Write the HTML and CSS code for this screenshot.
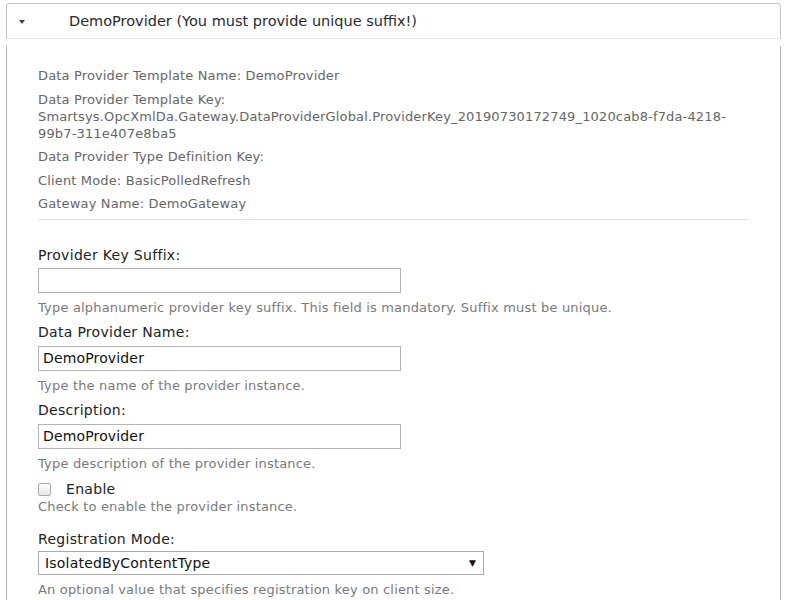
FILE: index.html
```html
<!DOCTYPE html>
<html>
<head>
<meta charset="utf-8">
<link rel="stylesheet" href="styles.css">
</head>
<body>
<div class="page">
  <div class="header">
    <span class="caret"></span>
    <span class="title">DemoProvider (You must provide unique suffix!)</span>
  </div>
  <div class="panel">
    <div class="info">
      <p class="info-item">Data Provider Template Name: DemoProvider</p>
      <p class="info-item">Data Provider Template Key:<br>Smartsys.OpcXmlDa.Gateway.DataProviderGlobal.ProviderKey_20190730172749_1020cab8-f7da-4218-99b7-311e407e8ba5</p>
      <p class="info-item">Data Provider Type Definition Key:</p>
      <p class="info-item">Client Mode: BasicPolledRefresh</p>
      <p class="info-item">Gateway Name: DemoGateway</p>
    </div>
    <div class="sep"></div>
    <div class="field first">
      <label class="label">Provider Key Suffix:</label>
      <div class="input"></div>
      <p class="help">Type alphanumeric provider key suffix. This field is mandatory. Suffix must be unique.</p>
    </div>
    <div class="field">
      <label class="label">Data Provider Name:</label>
      <div class="input">DemoProvider</div>
      <p class="help">Type the name of the provider instance.</p>
    </div>
    <div class="field">
      <label class="label">Description:</label>
      <div class="input">DemoProvider</div>
      <p class="help">Type description of the provider instance.</p>
    </div>
    <div class="field check">
      <div class="check-row"><span class="box"></span><span class="check-label">Enable</span></div>
      <p class="help">Check to enable the provider instance.</p>
    </div>
    <div class="field reg">
      <label class="label">Registration Mode:</label>
      <div class="select"><span>IsolatedByContentType</span><span class="arrow">▼</span></div>
      <p class="help">An optional value that specifies registration key on client size.</p>
    </div>
  </div>
</div>
</body>
</html>
```
FILE: styles.css
```css
html, body {
  margin: 0;
  padding: 0;
  background: #fff;
}
body {
  font-family: "DejaVu Sans", Verdana, sans-serif;
  overflow: hidden;
}
.page {
  padding: 3px 26px 0 6px;
}
.header {
  box-sizing: border-box;
  height: 36px;
  border: 1px solid #c4c4c4;
  border-bottom-color: #e6e6e6;
  border-radius: 4px 4px 0 0;
  display: flex;
  align-items: center;
  padding-left: 12px;
}
.caret {
  width: 0;
  height: 0;
  border-left: 3.5px solid transparent;
  border-right: 3.5px solid transparent;
  border-top: 4px solid #444;
  margin-top: 1px;
}
.title {
  margin-left: 44px;
  font-size: 14.5px;
  color: #2a2a2a;
}
.panel {
  margin-top: 7px;
  border-left: 1px solid #b4b4b4;
  border-right: 1px solid #b4b4b4;
  padding: 21px 32px 40px 31px;
  height: 600px;
}
.info-item {
  margin: 0 0 6.6px 0;
  font-size: 13px;
  line-height: 17px;
  color: #666;
  letter-spacing: 0.15px;
}
.sep {
  height: 1px;
  background: #e2e2e2;
  margin-top: 7px;
}
.field {
  display: flex;
  flex-direction: column;
  align-items: flex-start;
}
.field.first {
  margin-top: 26px;
}
.label {
  font-size: 14px;
  line-height: 18px;
  color: #222;
  margin-top: 7px;
  margin-bottom: 5px;
  letter-spacing: 0.3px;
}
.field.first .label {
  margin-top: 0;
  margin-bottom: 4px;
}
.input {
  box-sizing: border-box;
  width: 363px;
  height: 25px;
  border: 1px solid #b4b4b4;
  font-size: 14px;
  line-height: 23px;
  color: #111;
  padding-left: 4px;
  letter-spacing: 0.15px;
}
.help {
  margin: 6px 0 0 0;
  font-size: 13px;
  line-height: 17px;
  color: #7a7a7a;
  letter-spacing: 0.18px;
}
.field.check {
  margin-top: 8px;
}
.check-row {
  display: flex;
  align-items: center;
  height: 18px;
}
.box {
  box-sizing: border-box;
  width: 13px;
  height: 13px;
  border: 1px solid #aaa;
  border-radius: 2px;
  background: linear-gradient(#fcfcfc, #e8e8e8);
}
.check-label {
  margin-left: 15px;
  font-size: 14px;
  color: #222;
  letter-spacing: 0.3px;
}
.check-row + .help {
  margin-top: 0;
}
.field.reg {
  margin-top: 8px;
}
.field.reg .label {
  margin-bottom: 3px;
}
.select {
  box-sizing: border-box;
  width: 446px;
  height: 24px;
  border: 1px solid #aaa;
  display: flex;
  align-items: center;
  justify-content: space-between;
  padding: 0 7px 0 6px;
  font-size: 14px;
  color: #111;
  letter-spacing: 0.2px;
}
.arrow {
  font-size: 9px;
  color: #111;
}
```
